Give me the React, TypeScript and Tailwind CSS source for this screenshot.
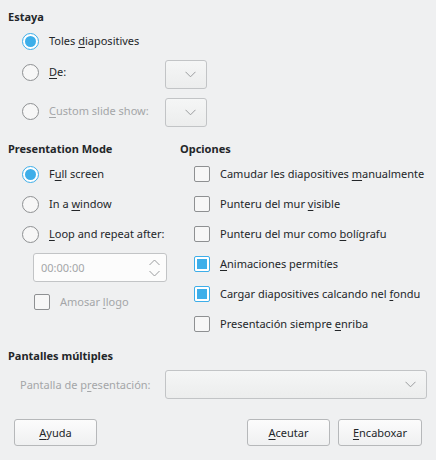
import React from 'react';

function U({ text, i }: { text: string; i: number }) {
  if (i < 0) return <>{text}</>;
  return (
    <>
      {text.slice(0, i)}
      <span className="underline underline-offset-2">{text[i]}</span>
      {text.slice(i + 1)}
    </>
  );
}

function Radio({ checked, label, u, disabled }: { checked?: boolean; label: string; u: number; disabled?: boolean }) {
  return (
    <div className="flex items-center whitespace-nowrap">
      {checked ? (
        <span className="w-[17px] h-[17px] rounded-full border border-[#3daee9] bg-white flex items-center justify-center">
          <span className="w-[11px] h-[11px] rounded-full bg-[#3daee9]" />
        </span>
      ) : (
        <span className="w-[17px] h-[17px] rounded-full border border-[#8e9092] bg-[#f7f7f7]" />
      )}
      <span className={`ml-[10px] ${disabled ? 'text-[#a4a6a8]' : ''}`}>
        <U text={label} i={u} />
      </span>
    </div>
  );
}

function Check({ checked, label, u, disabled }: { checked?: boolean; label: string; u: number; disabled?: boolean }) {
  return (
    <div className="flex items-center whitespace-nowrap">
      {checked ? (
        <span className="w-[16px] h-[16px] rounded-[2px] border border-[#3daee9] bg-white flex items-center justify-center">
          <span className="w-[10px] h-[10px] bg-[#3daee9]" />
        </span>
      ) : (
        <span className="w-[16px] h-[16px] rounded-[2px] border border-[#8e9092] bg-[#f7f7f7]" />
      )}
      <span className={`ml-[10px] ${disabled ? 'text-[#a4a6a8]' : ''}`}>
        <U text={label} i={u} />
      </span>
    </div>
  );
}

function Chevron() {
  return (
    <svg width="11" height="7" viewBox="0 0 11 7" fill="none">
      <path d="M0.5 0.8 L5.5 5.8 L10.5 0.8" stroke="#9a9c9e" strokeWidth="1" />
    </svg>
  );
}

function Combo({ w }: { w: string }) {
  return (
    <div className={`${w} h-[29px] rounded-[3px] border border-[#c2c4c6] bg-gradient-to-b from-[#f5f6f6] to-[#eceded] flex items-center justify-end pr-[10px]`}>
      <Chevron />
    </div>
  );
}

function Button({ label, u, w }: { label: string; u: number; w: string }) {
  return (
    <div className={`${w} h-[27px] rounded-[3px] border border-[#b6b8ba] bg-gradient-to-b from-[#fcfcfc] to-[#eff0f1] flex items-center justify-center`}>
      <U text={label} i={u} />
    </div>
  );
}

export default function App() {
  return (
    <div
      className="w-[436px] h-[460px] bg-[#eff0f1] text-[#232629] text-[11px] leading-[18px] px-[8px] pt-[8px] flex flex-col whitespace-nowrap"
      style={{ fontFamily: '"Noto Sans", sans-serif' }}
    >
      <div className="font-bold h-[18px]">Estaya</div>

      <div className="pl-[14px] flex flex-col">
        <div className="h-[22px] mt-[4px] flex items-center">
          <Radio checked label="Toles diapositives" u={6} />
        </div>
        <div className="h-[29px] mt-[8px] flex items-center">
          <div className="w-[143px] mb-[5px]">
            <Radio label="De:" u={0} />
          </div>
          <Combo w="w-[42px]" />
        </div>
        <div className="h-[29px] mt-[9px] flex items-center">
          <div className="w-[143px] mb-[3px]">
            <Radio label="Custom slide show:" u={0} disabled />
          </div>
          <Combo w="w-[42px]" />
        </div>
      </div>

      <div className="flex mt-[13px]">
        <div className="w-[172px] flex flex-col">
          <div className="font-bold h-[18px]">Presentation Mode</div>
          <div className="pl-[14px] flex flex-col">
            <div className="h-[30px] mt-[1px] flex items-center">
              <Radio checked label="Full screen" u={1} />
            </div>
            <div className="h-[30px] flex items-center">
              <Radio label="In a window" u={5} />
            </div>
            <div className="h-[30px] flex items-center">
              <Radio label="Loop and repeat after:" u={0} />
            </div>
            <div className="ml-[11px] mt-[4px] w-[134px] h-[29px] rounded-[3px] border border-[#c2c4c6] bg-[#fcfcfc] flex items-center justify-between pl-[7px] pr-[6px]">
              <span className="text-[#a4a6a8]">00:00:00</span>
              <svg width="11" height="18" viewBox="0 0 11 18" fill="none">
                <path d="M0.5 6 L5.5 1 L10.5 6" stroke="#9a9c9e" />
                <path d="M0.5 12 L5.5 17 L10.5 12" stroke="#9a9c9e" />
              </svg>
            </div>
            <div className="ml-[12px] h-[24px] mt-[8px] flex items-center">
              <Check label="Amosar llogo" u={7} disabled />
            </div>
          </div>
        </div>

        <div className="flex flex-col">
          <div className="font-bold h-[18px]">Opciones</div>
          <div className="pl-[14px] flex flex-col mt-[1px]">
            <div className="h-[30px] flex items-center">
              <Check label="Camudar les diapositives manualmente" u={25} />
            </div>
            <div className="h-[30px] flex items-center">
              <Check label="Punteru del mur visible" u={16} />
            </div>
            <div className="h-[30px] flex items-center">
              <Check label="Punteru del mur como bolígrafu" u={21} />
            </div>
            <div className="h-[30px] flex items-center">
              <Check checked label="Animaciones permitíes" u={0} />
            </div>
            <div className="h-[30px] flex items-center">
              <Check checked label="Cargar diapositives calcando nel fondu" u={33} />
            </div>
            <div className="h-[30px] flex items-center">
              <Check label="Presentación siempre enriba" u={21} />
            </div>
          </div>
        </div>
      </div>

      <div className="font-bold h-[18px] mt-[8px]">Pantalles múltiples</div>
      <div className="flex items-center mt-[5px] pl-[12px]">
        <div className="w-[145px] text-[#a4a6a8]">
          <U text="Pantalla de presentación:" i={13} />
        </div>
        <Combo w="w-[262px]" />
      </div>

      <div className="flex mt-[20px] pl-[6px]">
        <Button label="Ayuda" u={0} w="w-[83px]" />
        <div className="flex-1" />
        <Button label="Aceutar" u={0} w="w-[83px]" />
        <div className="w-[8px]" />
        <Button label="Encaboxar" u={0} w="w-[84px]" />
        <div className="w-[6px]" />
      </div>
    </div>
  );
}
